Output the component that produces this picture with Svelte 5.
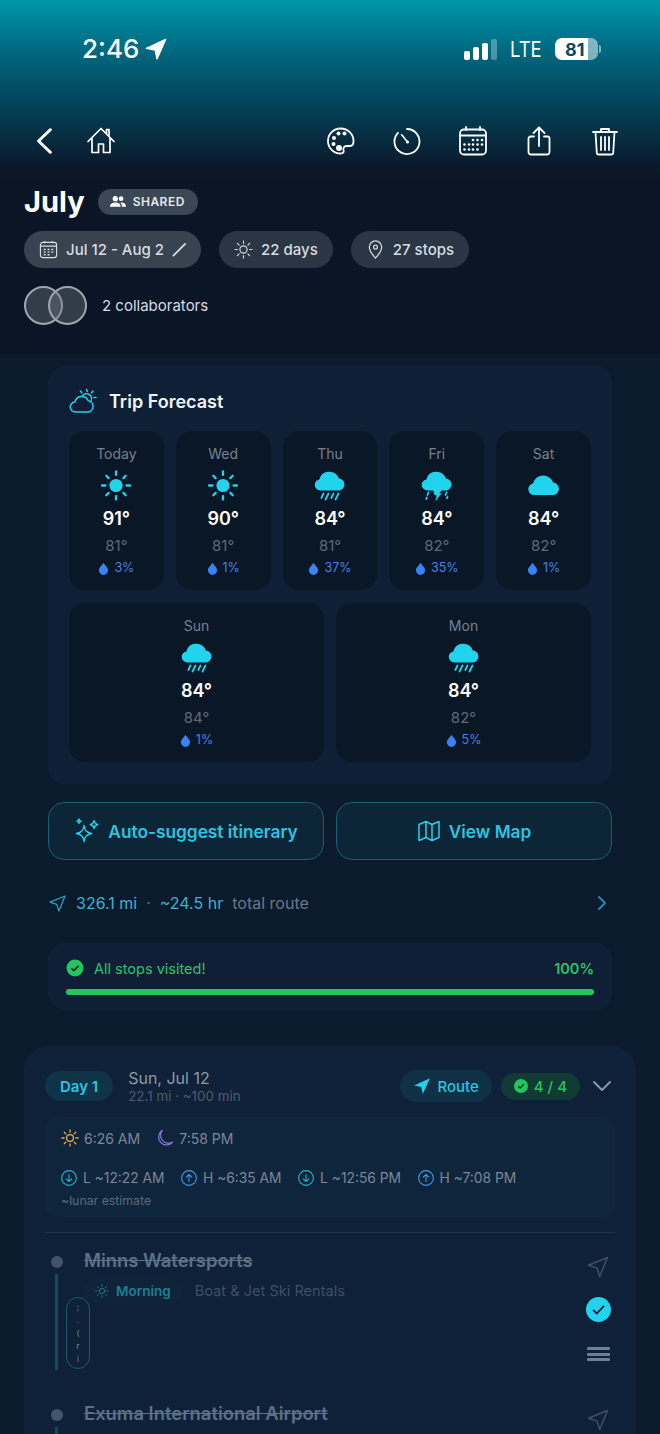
<script>
  const row1 = [
    { day: 'Today', icon: 'sun', hi: 91, lo: 81, rain: 3 },
    { day: 'Wed', icon: 'sun', hi: 90, lo: 81, rain: 1 },
    { day: 'Thu', icon: 'rain', hi: 84, lo: 81, rain: 37 },
    { day: 'Fri', icon: 'storm', hi: 84, lo: 82, rain: 35 },
    { day: 'Sat', icon: 'cloud', hi: 84, lo: 82, rain: 1 },
  ];
  const row2 = [
    { day: 'Sun', icon: 'rain', hi: 84, lo: 84, rain: 1 },
    { day: 'Mon', icon: 'rain', hi: 84, lo: 82, rain: 5 },
  ];
  const tides = [
    { dir: 'down', text: 'L ~12:22 AM' },
    { dir: 'up', text: 'H ~6:35 AM' },
    { dir: 'down', text: 'L ~12:56 PM' },
    { dir: 'up', text: 'H ~7:08 PM' },
  ];
  const cloudPath = 'M6.500 21.500a5.600 5.600 0 0 1-1.200-11.100A10.200 10.200 0 0 1 24.800 9.600a6 6 0 0 1 .7 11.900z';
</script>

{#snippet tile(t)}
  <div class="tile">
    <span class="tile-day">{t.day}</span>
    <svg class="wx" viewBox="0 0 32 32" width="32" height="32">
      {#if t.icon === 'sun'}
        <circle cx="16" cy="16.500" r="6.600" fill="#22d3ee" />
        <g stroke="#22d3ee" stroke-width="2.300" stroke-linecap="round">
          <path d="M16 2.500v3.400M16 27.100v3.400M2 16.500h3.400M26.600 16.500H30M6.300 6.800l2.300 2.300M23.400 23.900l2.300 2.300M6.300 26.200l2.300-2.300M23.400 9.100l2.300-2.300" />
        </g>
      {:else if t.icon === 'cloud'}
        <path transform="translate(-.5 3.500) scale(1.030 1.050)" d={cloudPath} fill="#22d3ee" />
      {:else}
        <path d={cloudPath} fill="#22d3ee" />
        {#if t.icon === 'rain'}
          <g stroke="#22d3ee" stroke-width="1.800" stroke-linecap="round">
            <path d="M9.500 24.500l-2.200 4.500M14.500 24.500l-3 6M19.500 24.500l-2.200 4.500M24.500 24.500l-3 6" />
          </g>
        {:else}
          <path d="M12.500 21h8l-2.600 3.500h2.300L14.800 31.500l1.200-5.500h-2.300z" fill="#22d3ee" stroke="#22d3ee" stroke-width=".5" stroke-linejoin="round" />
          <g stroke="#22d3ee" stroke-width="1.800" stroke-linecap="round">
            <path d="M7.500 23.500l-1 2.500M5.800 28.500l-.6 1.500M25.500 23.500l-1 2.500M26.500 27.500l-.6 1.700" />
          </g>
        {/if}
      {/if}
    </svg>
    <span class="tile-hi">{t.hi}°</span>
    <span class="tile-lo">{t.lo}°</span>
    <span class="tile-rain">
      <svg viewBox="0 0 12 14" width="11" height="13"><path d="M6 .8C4.500 3.500 1 6 1 9a5 5 0 0 0 10 0C11 6 7.500 3.500 6 .8z" fill="#3b82f6" /></svg>
      {t.rain}%
    </span>
  </div>
{/snippet}

{#snippet navArrow(size, color, width)}
  <svg viewBox="0 0 24 24" width={size} height={size} fill="none" stroke={color} stroke-width={width} stroke-linejoin="round"><path d="M21.500 2.500L2.500 10.300l8.500 2.800 2.700 8.400z" /></svg>
{/snippet}

<div class="page">
  <header class="hero">
    <div class="status">
      <div class="time">
        <span>2:46</span>
        <svg viewBox="0 0 24 24" width="22" height="22"><path d="M22.500 1.500L1.500 11.200l9.600 2 2 9.600z" fill="#fff" stroke="#fff" stroke-width="1.500" stroke-linejoin="round" /></svg>
      </div>
      <div class="status-right">
        <div class="signal"><i class="s1"></i><i class="s2"></i><i class="s3"></i><i class="s4"></i></div>
        <span class="lte">LTE</span>
        <div class="battery"><div class="battery-body"><b>81</b></div><i></i></div>
      </div>
    </div>

    <nav class="toolbar">
      <div class="tools">
        <svg viewBox="0 0 24 24" width="26" height="26" class="back" fill="none" stroke="#fff" stroke-width="2.600" stroke-linecap="round" stroke-linejoin="round"><path d="M17 1.500L6 12l11 10.500" /></svg>
        <svg viewBox="0 0 30 30" width="30" height="30" fill="none" stroke="#fff" stroke-width="1.700" stroke-linejoin="round" stroke-linecap="round"><path d="M2 15.500L15 2.500l13 13M6 12v14.500h6.500V18h5v8.500H24V12M20.500 7V3.500H23v6" /></svg>
      </div>
      <div class="tools right">
        <svg viewBox="0 0 30 30" width="30" height="30" fill="none" stroke="#fff" stroke-width="1.800"><path d="M14.500 2.500C7.500 2.500 2 8 2 15s5.500 12.500 12.500 12.500c3 0 3.500-1.500 3-3.200-.6-2.200.6-4.300 3-4.300h3.300c2.500 0 3.700-1.600 3.700-4.500 0-7.500-5.500-13-13-13z" /><g fill="#fff" stroke="none"><circle cx="8" cy="12" r="2" /><circle cx="12.500" cy="7.500" r="2" /><circle cx="18.500" cy="7.500" r="2" /><circle cx="7.500" cy="18" r="2" /><circle cx="13" cy="22" r="3" /></g></svg>
        <svg viewBox="0 0 30 30" width="30" height="30" fill="none" stroke="#fff" stroke-width="1.800" stroke-linecap="round"><path d="M15 3a12.500 12.500 0 1 1-9 3.800" /><path d="M9.500 8.500l6 7.500" stroke-width="1.600" /><circle cx="15.500" cy="16" r="1.500" fill="#fff" stroke="none" /></svg>
        <svg viewBox="0 0 30 30" width="30" height="30" fill="none" stroke="#fff" stroke-width="1.800" stroke-linecap="round"><rect x="2" y="3.500" width="26" height="25" rx="4" /><path d="M2 9.500h26M8 1v3M22 1v3" /><g fill="#fff" stroke="none"><circle cx="15" cy="14" r="1.300" /><circle cx="19.500" cy="14" r="1.300" /><circle cx="24" cy="14" r="1.300" /><circle cx="6.500" cy="18.500" r="1.300" /><circle cx="11" cy="18.500" r="1.300" /><circle cx="15" cy="18.500" r="1.300" /><circle cx="19.500" cy="18.500" r="1.300" /><circle cx="24" cy="18.500" r="1.300" /><circle cx="6.500" cy="23.500" r="1.300" /><circle cx="11" cy="23.500" r="1.300" /><circle cx="15" cy="23.500" r="1.300" /><circle cx="19.500" cy="23.500" r="1.300" /></g></svg>
        <svg viewBox="0 0 30 30" width="30" height="30" fill="none" stroke="#fff" stroke-width="1.800" stroke-linecap="round" stroke-linejoin="round"><path d="M10 10.500H6.500a2 2 0 0 0-2 2V26a2.500 2.500 0 0 0 2.500 2.500h16a2.500 2.500 0 0 0 2.500-2.500V12.500a2 2 0 0 0-2-2H20M15 20V1.500M9.500 7L15 1.500 20.500 7" /></svg>
        <svg viewBox="0 0 30 30" width="30" height="30" fill="none" stroke="#fff" stroke-width="1.800" stroke-linecap="round" stroke-linejoin="round"><path d="M3 6h24M11 6V3h8v3M5.500 6l1.300 21a1.500 1.500 0 0 0 1.500 1.500h13.400a1.500 1.500 0 0 0 1.500-1.500L24.500 6M11 11v13M15 11v13M19 11v13" /></svg>
      </div>
    </nav>

    <div class="title-row">
      <h1>July</h1>
      <span class="shared">
        <svg viewBox="0 0 18 14" width="16" height="13" fill="#fff"><circle cx="6" cy="3.800" r="3" /><circle cx="12.500" cy="3.800" r="2.600" /><path d="M0 13c0-3.300 2.500-5 6-5s6 1.700 6 5zM13.500 13c0-2-.6-3.500-1.800-4.700 3.500-.5 6.300 1 6.300 4.700z" /></svg>
        SHARED
      </span>
    </div>

    <div class="pills">
      <span class="pill lit">
        <svg viewBox="0 0 20 20" width="19" height="19" fill="none" stroke="#d7dce2" stroke-width="1.200"><rect x="1.500" y="2.500" width="17" height="16" rx="2.500" /><path d="M1.500 6.500h17M6 1v2.500M14 1v2.500" /><path d="M5 10h2M9 10h2M13 10h2M5 12.800h2M9 12.800h2M13 12.800h2M5 15.500h2M9 15.500h2" stroke-width="1.400" /></svg>
        Jul 12 - Aug 2
        <svg viewBox="0 0 16 16" width="15" height="15" fill="none" stroke="#d7dce2" stroke-width="1.900" stroke-linecap="round"><path d="M1.500 14.500L14 2" /></svg>
      </span>
      <span class="pill">
        <svg viewBox="0 0 20 20" width="19" height="19" fill="none" stroke="#d7dce2" stroke-width="1.200" stroke-linecap="round"><circle cx="10" cy="10" r="3.800" /><path d="M10 1v2.500M10 16.500V19M1 10h2.500M16.500 10H19M3.600 3.600l1.800 1.800M14.600 14.600l1.800 1.800M3.600 16.400l1.800-1.800M14.600 5.400l1.800-1.800" /></svg>
        22 days
      </span>
      <span class="pill">
        <svg viewBox="0 0 20 20" width="19" height="19" fill="none" stroke="#d7dce2" stroke-width="1.300"><path d="M10 19C6 14.500 3.500 11 3.500 7.500a6.500 6.500 0 0 1 13 0C16.500 11 14 14.500 10 19z" /><circle cx="10" cy="7.500" r="2" /></svg>
        27 stops
      </span>
    </div>

    <div class="collab">
      <div class="avatars"><i></i><i></i></div>
      <span>2 collaborators</span>
    </div>
  </header>

  <main class="content">
    <section class="forecast">
      <div class="forecast-head">
        <svg viewBox="0 0 28 26" width="28" height="26" fill="none" stroke="#22d3ee" stroke-width="1.500" stroke-linecap="round" stroke-linejoin="round"><path d="M6.500 24a5 5 0 0 1-.6-10 7 7 0 0 1 13.300-1.300A5.700 5.700 0 0 1 19 24z" /><path d="M13.500 7.800a5 5 0 0 1 8.500 5.200M17.500 1.500l.8 2M24 3l-1.500 1.800M27 9.500h-2.200M11.500 3l1.300 1.800" /></svg>
        <h2>Trip Forecast</h2>
      </div>
      <div class="tile-row">
        {#each row1 as t}{@render tile(t)}{/each}
      </div>
      <div class="tile-row">
        {#each row2 as t}{@render tile(t)}{/each}
      </div>
    </section>

    <div class="actions">
      <button>
        <svg viewBox="0 0 26 26" width="26" height="26" fill="none" stroke="#22d3ee" stroke-width="1.400" stroke-linejoin="round"><path d="M10 7.500c.8 5 2.500 7 7.500 8-5 1-6.700 3-7.500 8-.8-5-2.500-7-7.500-8 5-1 6.700-3 7.500-8zM20 2.500c.4 2.500 1.300 3.500 3.800 4-2.500.5-3.400 1.500-3.800 4-.4-2.500-1.300-3.500-3.800-4 2.500-.5 3.400-1.500 3.800-4zM5 1c.2 1.400.7 1.900 2 2.200-1.300.3-1.800.8-2 2.200-.2-1.400-.7-1.900-2-2.200 1.300-.3 1.800-.8 2-2.200z" /></svg>
        Auto-suggest itinerary
      </button>
      <button>
        <svg viewBox="0 0 24 24" width="24" height="24" fill="none" stroke="#22d3ee" stroke-width="1.500" stroke-linejoin="round"><path d="M2 5.500l7-3 6 3 7-3v16l-7 3-6-3-7 3zM9 2.500v16M15 5.500v16" /></svg>
        View Map
      </button>
    </div>

    <div class="route">
      {@render navArrow(19, '#22a8c4', 1.6)}
      <span class="route-val">326.1 mi</span>
      <span class="route-dot">·</span>
      <span class="route-val">~24.5 hr</span>
      <span class="route-note">total route</span>
      <svg class="route-chev" viewBox="0 0 12 16" width="12" height="16" fill="none" stroke="#1f8fae" stroke-width="1.800" stroke-linecap="round" stroke-linejoin="round"><path d="M3 2l6 6-6 6" /></svg>
    </div>

    <section class="progress">
      <div class="progress-head">
        <span class="done">
          <svg viewBox="0 0 18 18" width="18" height="18"><circle cx="9" cy="9" r="8.500" fill="#22c55e" /><path d="M5.300 9.300l2.500 2.500 4.800-5" fill="none" stroke="#0b1a2c" stroke-width="1.500" /></svg>
          All stops visited!
        </span>
        <b>100%</b>
      </div>
      <div class="bar"><div class="bar-fill" style="width: 100%"></div></div>
    </section>

    <section class="day">
      <div class="day-head">
        <span class="day-badge">Day 1</span>
        <div class="day-date">
          <span>Sun, Jul 12</span>
          <small>22.1 mi · ~100 min</small>
        </div>
        <span class="route-chip">
          <svg viewBox="0 0 24 24" width="18" height="18"><path d="M22.500 1.500L1.500 11.200l9.600 2 2 9.600z" fill="#22d3ee" /></svg>
          Route
        </span>
        <span class="count-chip">
          <svg viewBox="0 0 18 18" width="14" height="14"><circle cx="9" cy="9" r="9" fill="#22c55e" /><path d="M5.300 9.300l2.500 2.500 4.800-5" fill="none" stroke="#0b2a24" stroke-width="1.600" /></svg>
          4 / 4
        </span>
        <svg class="day-chev" viewBox="0 0 20 12" width="20" height="12" fill="none" stroke="#8a97a8" stroke-width="2" stroke-linecap="round" stroke-linejoin="round"><path d="M2 2l8 8 8-8" /></svg>
      </div>

      <div class="almanac">
        <div class="sun-row">
          <span>
            <svg viewBox="0 0 20 20" width="18" height="18" fill="none" stroke="#eab04a" stroke-width="1.400" stroke-linecap="round"><circle cx="10" cy="10" r="3.800" /><path d="M10 1v2.500M10 16.500V19M1 10h2.500M16.500 10H19M3.600 3.600l1.800 1.800M14.600 14.600l1.800 1.800M3.600 16.400l1.800-1.800M14.600 5.400l1.800-1.800" /></svg>
            6:26 AM
          </span>
          <span>
            <svg viewBox="0 0 20 20" width="18" height="18" fill="none" stroke="#8b6fd6" stroke-width="1.400" stroke-linejoin="round"><path d="M7 1.500a8.800 8.800 0 0 0 11.500 13A8.800 8.800 0 1 1 7 1.500z" /></svg>
            7:58 PM
          </span>
        </div>
        <div class="tide-row">
          {#each tides as t}
            <span>
              <svg viewBox="0 0 16 16" width="16" height="16" fill="none" stroke={t.dir === 'up' ? '#3b9be8' : '#1fb2c9'} stroke-width="1.100" stroke-linecap="round" stroke-linejoin="round">
                <circle cx="8" cy="8" r="7.400" />
                {#if t.dir === 'up'}<path d="M8 11.500v-7M5.200 7.200L8 4.500l2.800 2.700" />{:else}<path d="M8 4.500v7M5.200 8.800L8 11.500l2.800-2.700" />{/if}
              </svg>
              {t.text}
            </span>
          {/each}
        </div>
        <small>~lunar estimate</small>
      </div>

      <div class="stop first">
        <div class="rail">
          <i class="dot"></i>
          <i class="line"></i>
          <div class="capsule">
            <span>;</span><span>.</span><span>(</span><span>r</span><span>i</span>
          </div>
        </div>
        <div class="stop-main">
          <h3>Minns Watersports</h3>
          <div class="stop-meta">
            <span class="slot">
              <svg viewBox="0 0 20 20" width="14" height="14" fill="none" stroke="#1d7f97" stroke-width="1.300" stroke-linecap="round"><circle cx="10" cy="10" r="3.800" /><path d="M10 1v2.500M10 16.500V19M1 10h2.500M16.500 10H19M3.600 3.600l1.800 1.800M14.600 14.600l1.800 1.800M3.600 16.400l1.800-1.800M14.600 5.400l1.800-1.800" /></svg>
              Morning
            </span>
            <span class="kind">Boat &amp; Jet Ski Rentals</span>
          </div>
        </div>
        <div class="stop-side">
          {@render navArrow(24, '#3f5063', 1.5)}
          <svg viewBox="0 0 26 26" width="25" height="25"><circle cx="13" cy="13" r="13" fill="#22d3ee" /><path d="M7.500 13.500l3.700 3.700 7.500-8" fill="none" stroke="#0d1f33" stroke-width="1.900" /></svg>
          <div class="grip"><i></i><i></i><i></i></div>
        </div>
      </div>

      <div class="stop">
        <div class="rail"><i class="dot"></i><i class="line"></i></div>
        <div class="stop-main"><h3>Exuma International Airport</h3></div>
        <div class="stop-side">{@render navArrow(24, '#3f5063', 1.5)}</div>
      </div>
    </section>
  </main>
</div>

<style>
  :global(body) {
    margin: 0;
    background: #0b1a2c;
  }

  .page {
    height: 1434px;
    overflow: hidden;
    font-family: Inter, "Liberation Sans", sans-serif;
    color: #fff;
    background: #0b1a2c;
  }

  .hero {
    height: 354px;
    box-sizing: border-box;
    padding: 0 24px;
    background: linear-gradient(#0097ab 0, #006b82 48px, #03465c 100px, #0a1a2c 165px, #0a1625 180px, #0a1625 100%);
  }

  .status {
    height: 100px;
    padding: 0 59px 0 82px;
    margin: 0 -24px;
    display: flex;
    justify-content: space-between;
    align-items: flex-start;
  }

  .time {
    display: flex;
    align-items: center;
    gap: 6px;
    margin-top: 33px;
    font-size: 26px;
    font-weight: 500;
    line-height: 32px;
  }

  .status-right {
    display: flex;
    align-items: center;
    margin-top: 36px;
    gap: 13px;
  }

  .signal {
    display: flex;
    align-items: flex-end;
    gap: 3px;
    height: 21px;
  }

  .signal i {
    width: 6px;
    background: #fff;
    border-radius: 2px;
  }

  .s1 { height: 9px; }
  .s2 { height: 13px; }
  .s3 { height: 17px; }
  .signal .s4 { height: 21px; background: rgba(255, 255, 255, 0.3); }

  .lte {
    font-size: 22px;
    transform: scaleX(0.84);
    margin: 0 -3px;
  }

  .battery {
    display: flex;
    align-items: center;
    gap: 1px;
  }

  .battery-body {
    width: 43px;
    height: 22px;
    border-radius: 7px;
    background: linear-gradient(90deg, #fff 76%, rgba(255, 255, 255, 0.5) 76%);
    display: flex;
    align-items: center;
  }

  .battery-body b {
    color: #0a4a5f;
    font-size: 18px;
    font-weight: 700;
    margin-left: 10px;
  }

  .battery i {
    width: 2px;
    height: 8px;
    border-radius: 0 2px 2px 0;
    background: rgba(255, 255, 255, 0.5);
  }

  .toolbar {
    display: flex;
    justify-content: space-between;
    align-items: center;
    height: 34px;
    margin: 24px 16px 0 8px;
  }

  .tools {
    display: flex;
    align-items: center;
    gap: 28px;
  }

  .tools.right {
    gap: 36px;
  }

  .title-row {
    display: flex;
    align-items: center;
    gap: 13px;
    margin-top: 27px;
    height: 33px;
  }

  h1 {
    margin: 0;
    font-size: 29px;
    font-weight: 700;
    line-height: 34px;
  }

  .shared {
    display: flex;
    align-items: center;
    gap: 7px;
    height: 26px;
    padding: 0 13px 0 12px;
    border-radius: 13px;
    background: #3a4754;
    font-size: 12px;
    font-weight: 600;
    letter-spacing: 0.5px;
    color: #e5e9ed;
  }

  .pills {
    display: flex;
    gap: 18px;
    margin-top: 13px;
  }

  .pill {
    display: flex;
    align-items: center;
    gap: 8px;
    height: 37px;
    padding: 0 15px;
    border-radius: 19px;
    background: #2a3644;
    font-size: 15px;
    font-weight: 500;
    color: #d7dce2;
  }

  .pill.lit {
    background: #37434f;
    padding-right: 14px;
  }

  .collab {
    display: flex;
    align-items: center;
    gap: 15px;
    margin-top: 18px;
    font-size: 15px;
    color: #d7dce2;
  }

  .avatars {
    display: flex;
  }

  .avatars i {
    width: 39px;
    height: 39px;
    box-sizing: border-box;
    border: 2.500px solid #a0a6ae;
    border-radius: 50%;
    background: rgba(110, 120, 130, 0.4);
  }

  .avatars i + i {
    margin-left: -15px;
  }

  .content {
    padding: 12px 48px 0;
  }

  .forecast {
    height: 418px;
    box-sizing: border-box;
    padding: 0 21px;
    border-radius: 16px;
    background: #0f2036;
  }

  .forecast-head {
    display: flex;
    align-items: center;
    gap: 12px;
    height: 65px;
    box-sizing: border-box;
    padding-top: 5px;
  }

  h2 {
    margin: 0;
    font-size: 18px;
    font-weight: 600;
    color: #f1f4f6;
  }

  .tile-row {
    display: flex;
    gap: 12px;
    margin-bottom: 13px;
  }

  .tile {
    flex: 1;
    height: 159px;
    padding-top: 13.500px;
    box-sizing: border-box;
    display: flex;
    flex-direction: column;
    align-items: center;
    border-radius: 16px;
    background: #0a1726;
  }

  .tile-day {
    font-size: 14px;
    line-height: 17px;
    color: #758290;
  }

  .wx {
    margin: 7px 0 4.500px;
  }

  .tile-hi {
    font-size: 18px;
    font-weight: 600;
    line-height: 28px;
  }

  .tile-lo {
    font-size: 15px;
    line-height: 20px;
    color: #5f6b79;
    margin-top: 3px;
  }

  .tile-rain {
    display: flex;
    align-items: center;
    gap: 5px;
    font-size: 12.500px;
    line-height: 16px;
    color: #4583e8;
    margin-top: 4px;
  }

  .actions {
    display: flex;
    gap: 12px;
    margin-top: 18px;
  }

  button {
    flex: 1;
    height: 58px;
    display: flex;
    align-items: center;
    justify-content: center;
    gap: 8px;
    border: 1px solid #1b5f74;
    border-radius: 16px;
    background: #0c2537;
    color: #29c5e3;
    font: 600 17.300px Inter, sans-serif;
  }

  .route {
    display: flex;
    align-items: center;
    gap: 9px;
    height: 24px;
    margin-top: 31px;
    font-size: 16px;
  }

  .route-val {
    color: #36b4d2;
  }

  .route-dot {
    color: #5f6b79;
  }

  .route-note {
    color: #6b7885;
  }

  .route-chev {
    margin-left: auto;
    margin-right: 4px;
  }

  .progress {
    height: 67px;
    box-sizing: border-box;
    margin-top: 28px;
    padding: 16px 18px 0;
    border-radius: 16px;
    background: #0f2036;
  }

  .progress-head {
    display: flex;
    justify-content: space-between;
    align-items: center;
    font-size: 14.500px;
    font-weight: 400;
    color: #2fc267;
  }

  .done {
    display: flex;
    align-items: center;
    gap: 10px;
  }

  .progress-head b {
    font-weight: 600;
  }

  .bar {
    height: 6px;
    margin-top: 12px;
    border-radius: 3px;
    background: #1d2d40;
  }

  .bar-fill {
    height: 100%;
    border-radius: 3px;
    background: #22c55e;
  }

  .day {
    margin: 36px -24px 0;
    padding: 21px 21px 0;
    height: 420px;
    border-radius: 24px;
    background: #0e2138;
  }

  .day-head {
    display: flex;
    align-items: center;
    gap: 8px;
    height: 38px;
  }

  .day-badge {
    display: flex;
    align-items: center;
    height: 30px;
    padding: 0 15px;
    border-radius: 15px;
    background: #0f3347;
    color: #29c5e3;
    font-size: 15px;
    font-weight: 600;
  }

  .day-date {
    display: flex;
    flex-direction: column;
    flex: 1;
    margin-left: 7px;
    font-size: 16px;
    line-height: 20px;
    color: #8d98a6;
  }

  .day-date small {
    font-size: 13.400px;
    line-height: 16px;
    color: #4e5c6e;
  }

  .route-chip,
  .count-chip {
    display: flex;
    align-items: center;
    gap: 6px;
    height: 32px;
    padding: 0 13px;
    border-radius: 16px;
    font-size: 15px;
    font-weight: 500;
  }

  .route-chip {
    background: #0f3045;
    color: #29c5e3;
    margin-right: 1px;
  }

  .count-chip {
    height: 27px;
    background: #123a34;
    color: #22c55e;
    margin-right: 4px;
  }

  .day-chev {
    margin-right: 3px;
  }

  .almanac {
    margin-top: 12px;
    height: 100px;
    box-sizing: border-box;
    padding: 7px 14px 0 16px;
    border-radius: 12px;
    background: #0f253c;
  }

  .sun-row,
  .tide-row {
    display: flex;
    font-size: 14px;
    color: #7c8896;
  }

  .sun-row {
    gap: 16px;
    height: 28px;
    align-items: center;
  }

  .sun-row span {
    gap: 5px;
  }

  .tide-row {
    gap: 16.500px;
    margin-top: 12px;
    height: 28px;
    align-items: center;
    font-size: 13.800px;
  }

  .sun-row span,
  .tide-row span {
    display: flex;
    align-items: center;
  }

  .tide-row span {
    gap: 6px;
  }

  .almanac small {
    display: block;
    margin-top: 1px;
    font-size: 12.300px;
    color: #5c6a7a;
  }

  .stop {
    display: flex;
    position: relative;
    height: 153px;
  }

  .stop.first {
    margin-top: 15px;
    padding-top: 14px;
    border-top: 1px solid #1e3347;
  }

  .rail {
    width: 39px;
    position: relative;
    flex-shrink: 0;
  }

  .dot {
    position: absolute;
    left: 6px;
    top: 9px;
    width: 12px;
    height: 12px;
    border-radius: 50%;
    background: #41546a;
  }

  .line {
    position: absolute;
    left: 10px;
    top: 27px;
    width: 3px;
    height: 96px;
    background: #154a62;
  }

  .capsule {
    position: absolute;
    left: 21px;
    top: 50px;
    width: 24px;
    height: 72px;
    box-sizing: border-box;
    display: flex;
    flex-direction: column;
    align-items: center;
    justify-content: space-around;
    padding: 2px 0;
    border: 1px solid #1c5a6b;
    border-radius: 12px;
    font-size: 8px;
    line-height: 10px;
    color: #7d8fa0;
  }

  .stop-main {
    flex: 1;
  }

  h3 {
    margin: 0;
    padding-top: 1px;
    font-size: 18.400px;
    font-weight: 600;
    line-height: 24px;
    color: #5d7087;
    text-decoration: line-through;
  }

  .stop-meta {
    display: flex;
    align-items: center;
    gap: 13px;
    margin-top: 6px;
    font-size: 14.600px;
  }

  .slot {
    display: flex;
    align-items: center;
    gap: 7px;
    height: 26px;
    padding: 0 11px;
    border-radius: 13px;
    background: #0f2439;
    color: #1d7f97;
    font-size: 13.500px;
    font-weight: 600;
  }

  .kind {
    color: #3f4f63;
  }

  .stop-side {
    width: 34px;
    display: flex;
    flex-direction: column;
    align-items: center;
    gap: 18px;
    padding-top: 8px;
  }

  .grip {
    display: flex;
    flex-direction: column;
    gap: 2.500px;
    margin-top: 7px;
  }

  .grip i {
    display: block;
    width: 23px;
    height: 3px;
    border-radius: 1px;
    background: #6e8093;
  }
</style>
